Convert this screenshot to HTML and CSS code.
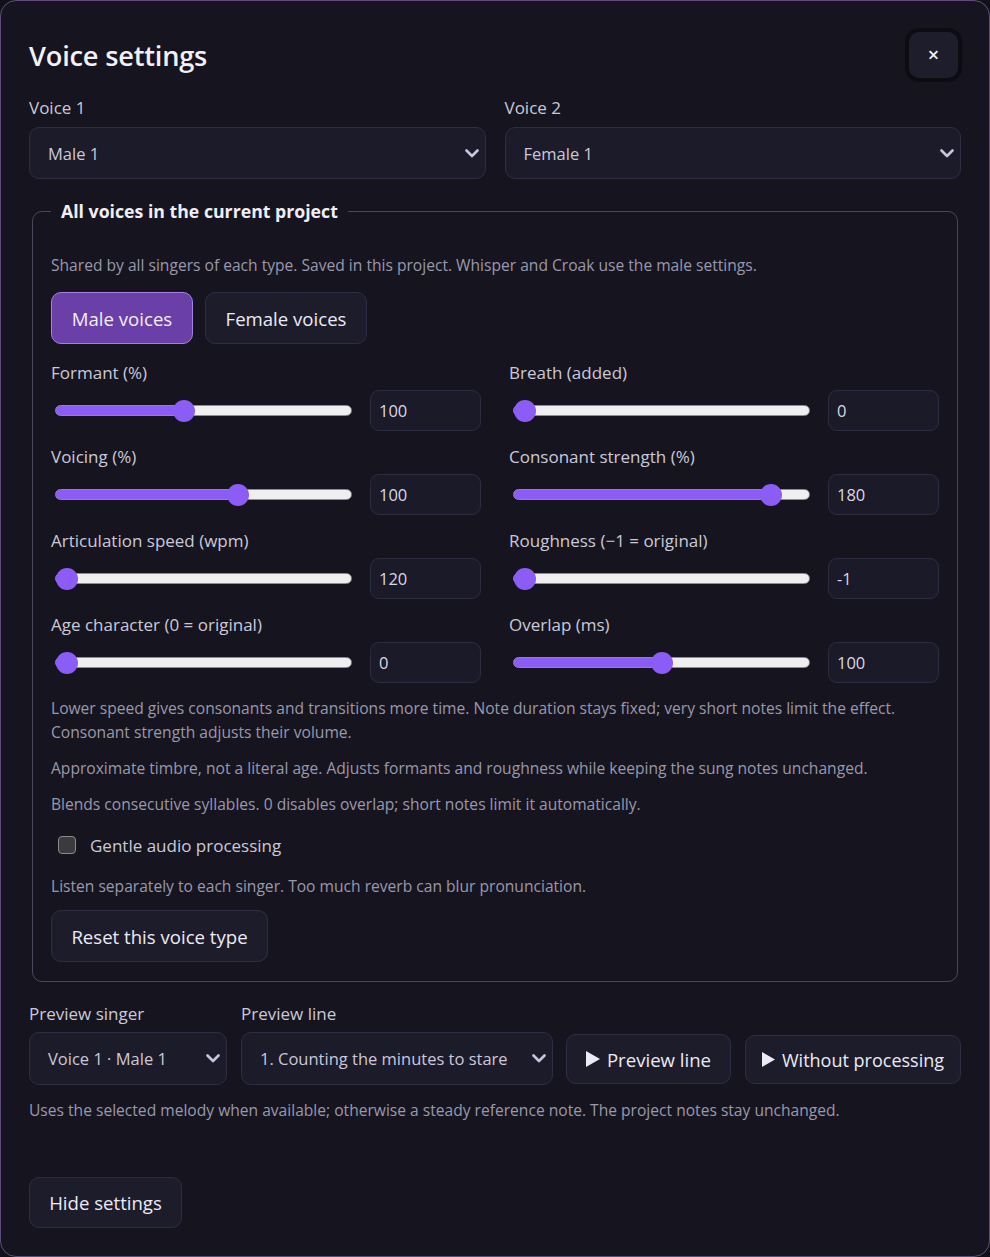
FILE: index.html
```html
<!DOCTYPE html>
<html lang="en">
<head>
<meta charset="utf-8">
<title>Voice settings</title>
<link rel="stylesheet" href="styles.css">
</head>
<body>
<div class="panel">
  <div class="header">
    <h1 class="title">Voice settings</h1>
    <button class="close-btn" aria-label="Close">×</button>
  </div>

  <div class="voice-row">
    <div class="field">
      <div class="label">Voice 1</div>
      <div class="select"><span>Male 1</span><svg class="chev" viewBox="0 0 14 9" width="14" height="9"><path d="M1.5 1.5 L7 7 L12.5 1.5" fill="none" stroke="currentColor" stroke-width="2.6" stroke-linecap="round" stroke-linejoin="round"/></svg></div>
    </div>
    <div class="field">
      <div class="label">Voice 2</div>
      <div class="select"><span>Female 1</span><svg class="chev" viewBox="0 0 14 9" width="14" height="9"><path d="M1.5 1.5 L7 7 L12.5 1.5" fill="none" stroke="currentColor" stroke-width="2.6" stroke-linecap="round" stroke-linejoin="round"/></svg></div>
    </div>
  </div>

  <fieldset class="group">
    <legend class="legend">All voices in the current project</legend>
    <p class="hint first">Shared by all singers of each type. Saved in this project. Whisper and Croak use the male settings.</p>
    <div class="tabs">
      <button class="btn tab active">Male voices</button>
      <button class="btn tab">Female voices</button>
    </div>

    <div class="sliders">
      <div class="slider-field">
        <div class="label">Formant (%)</div>
        <div class="slider-row">
          <input class="range" type="range" min="70" max="140" value="100" style="--p:43%">
          <div class="num">100</div>
        </div>
      </div>
      <div class="slider-field">
        <div class="label">Breath (added)</div>
        <div class="slider-row">
          <input class="range" type="range" min="0" max="100" value="0" style="--p:0%">
          <div class="num">0</div>
        </div>
      </div>
      <div class="slider-field">
        <div class="label">Voicing (%)</div>
        <div class="slider-row">
          <input class="range" type="range" min="0" max="160" value="100" style="--p:62.5%">
          <div class="num">100</div>
        </div>
      </div>
      <div class="slider-field">
        <div class="label">Consonant strength (%)</div>
        <div class="slider-row">
          <input class="range" type="range" min="0" max="200" value="180" style="--p:90%">
          <div class="num">180</div>
        </div>
      </div>
      <div class="slider-field">
        <div class="label">Articulation speed (wpm)</div>
        <div class="slider-row">
          <input class="range" type="range" min="120" max="300" value="120" style="--p:0%">
          <div class="num">120</div>
        </div>
      </div>
      <div class="slider-field">
        <div class="label">Roughness (−1 = original)</div>
        <div class="slider-row">
          <input class="range" type="range" min="-1" max="100" value="-1" style="--p:0%">
          <div class="num">-1</div>
        </div>
      </div>
      <div class="slider-field">
        <div class="label">Age character (0 = original)</div>
        <div class="slider-row">
          <input class="range" type="range" min="0" max="100" value="0" style="--p:0%">
          <div class="num">0</div>
        </div>
      </div>
      <div class="slider-field">
        <div class="label">Overlap (ms)</div>
        <div class="slider-row">
          <input class="range" type="range" min="0" max="200" value="100" style="--p:50%">
          <div class="num">100</div>
        </div>
      </div>
    </div>

    <p class="hint para">Lower speed gives consonants and transitions more time. Note duration stays fixed; very short notes limit the effect. Consonant strength adjusts their volume.</p>
    <p class="hint para">Approximate timbre, not a literal age. Adjusts formants and roughness while keeping the sung notes unchanged.</p>
    <p class="hint para">Blends consecutive syllables. 0 disables overlap; short notes limit it automatically.</p>

    <label class="check-row"><span class="checkbox"></span><span class="check-label">Gentle audio processing</span></label>
    <p class="hint para listen">Listen separately to each singer. Too much reverb can blur pronunciation.</p>
    <button class="btn reset">Reset this voice type</button>
  </fieldset>

  <div class="preview-row">
    <div class="field singer">
      <div class="label">Preview singer</div>
      <div class="select tall"><span>Voice 1 · Male 1</span><svg class="chev" viewBox="0 0 14 9" width="14" height="9"><path d="M1.5 1.5 L7 7 L12.5 1.5" fill="none" stroke="currentColor" stroke-width="2.6" stroke-linecap="round" stroke-linejoin="round"/></svg></div>
    </div>
    <div class="field line">
      <div class="label">Preview line</div>
      <div class="select tall"><span>1. Counting the minutes to stare</span><svg class="chev" viewBox="0 0 14 9" width="14" height="9"><path d="M1.5 1.5 L7 7 L12.5 1.5" fill="none" stroke="currentColor" stroke-width="2.6" stroke-linecap="round" stroke-linejoin="round"/></svg></div>
    </div>
    <button class="btn play"><svg class="tri" viewBox="0 0 14 16" width="14" height="16"><path d="M0 0 L14 8 L0 16 Z" fill="currentColor"/></svg>Preview line</button>
    <button class="btn play alt"><svg class="tri small" viewBox="0 0 14 16" width="13" height="15"><path d="M0 0 L14 8 L0 16 Z" fill="currentColor"/></svg>Without processing</button>
  </div>
  <p class="hint uses">Uses the selected melody when available; otherwise a steady reference note. The project notes stay unchanged.</p>

  <div class="footer">
    <button class="btn hide">Hide settings</button>
  </div>
</div>
</body>
</html>
```

FILE: styles.css
```css
* { box-sizing: border-box; }
html, body { margin: 0; padding: 0; background: #121119; }
body {
  font-family: "Open Sans", "Noto Sans", "DejaVu Sans", sans-serif;
  color: #cbc9d9;
  width: 990px;
  height: 1257px;
}
.panel {
  width: 990px;
  height: 1257px;
  background: #16151f;
  border: 1px solid #5d4d7f;
  border-radius: 16px;
  padding: 28px;
  display: flex;
  flex-direction: column;
}
.header {
  display: flex;
  justify-content: space-between;
  align-items: center;
  height: 52px;
}
.title {
  margin: 0;
  font-size: 27.2px;
  font-weight: 600;
  color: #f2f0fa;
  letter-spacing: -0.2px;
}
.close-btn {
  width: 49px;
  height: 46px;
  margin-right: 3px;
  border: none;
  border-radius: 10px;
  background: #1e1d2c;
  color: #f0eef8;
  font-family: inherit;
  font-size: 20px;
  font-weight: 600;
  box-shadow: 0 0 0 4px #0d0c13;
  padding: 0;
  line-height: 46px;
}
.voice-row {
  display: flex;
  gap: 19px;
  margin-top: 16px;
}
.field { display: flex; flex-direction: column; }
.voice-row .field { flex: 1; }
.label {
  font-size: 17px;
  line-height: 22px;
  color: #cbc9d9;
  white-space: nowrap;
}
.select {
  margin-top: 8px;
  height: 52px;
  background: #1c1b29;
  border: 1px solid #2f2d44;
  border-radius: 10px;
  display: flex;
  align-items: center;
  justify-content: space-between;
  padding: 0 6px 0 18px;
  font-size: 16.5px;
  color: #cbc8db;
  white-space: nowrap;
}
.chev { color: #c8c4dc; flex: none; }

.group {
  margin: 19px 3px 0;
  border: 1px solid #4a465f;
  border-radius: 10px;
  padding: 0 18px 19px;
  display: flex;
  flex-direction: column;
}
.legend {
  padding: 0 10px;
  margin-left: 0;
  font-size: 17.7px;
  line-height: 26px;
  font-weight: 700;
  color: #f0eef8;
}
.hint {
  margin: 0;
  font-size: 15.6px;
  line-height: 22px;
  color: #9a98ad;
}
.hint.first { margin-top: 30px; }
.tabs {
  display: flex;
  gap: 12px;
  margin-top: 16px;
}
.btn {
  font-family: inherit;
  font-size: 18.6px;
  color: #eceaf5;
  background: #1d1c2b;
  border: 1px solid #2f2d44;
  border-radius: 10px;
  padding: 0 20px;
  height: 52px;
  cursor: pointer;
  white-space: nowrap;
}
.tab { width: 142px; padding: 0; }
.tab + .tab { width: 162px; }
.tab.active {
  background: #6a40a8;
  border-color: #a47fe4;
  color: #f3eefc;
}
.sliders {
  display: grid;
  grid-template-columns: 1fr 1fr;
  column-gap: 28px;
  margin-top: 18px;
}
.slider-field { margin-bottom: 15px; }
.slider-row {
  display: flex;
  align-items: center;
  margin-top: 6px;
  height: 41px;
}
.range {
  -webkit-appearance: none;
  appearance: none;
  flex: 1;
  min-width: 0;
  margin: 0 18px 0 4px;
  height: 22px;
  background: transparent;
}
.range::-webkit-slider-runnable-track {
  height: 11px;
  border-radius: 6px;
  border: 1px solid #8f8a9a;
  background: linear-gradient(to right, #8b5cf6 0, #8b5cf6 calc(11px + (100% - 22px) * var(--p) / 100%), #efefef calc(11px + (100% - 22px) * var(--p) / 100%), #efefef 100%);
}
.range::-webkit-slider-thumb {
  -webkit-appearance: none;
  appearance: none;
  width: 22px;
  height: 22px;
  border-radius: 50%;
  background: #8b5cf6;
  border: none;
  margin-top: -6.5px;
}
.num {
  width: 111px;
  height: 41px;
  flex: none;
  background: #1b1a28;
  border: 1px solid #2d2b40;
  border-radius: 9px;
  padding: 0 8px;
  display: flex;
  align-items: center;
  font-size: 16.5px;
  color: #d9d7e5;
}
.hint.para {
  line-height: 24px;
}
.sliders + .hint.para { margin-top: -2px; }
.hint.para + .hint.para { margin-top: 12px; }
.check-row {
  display: flex;
  align-items: center;
  margin-top: 18px;
  height: 22px;
}
.checkbox {
  width: 18px;
  height: 18px;
  margin-left: 7px;
  border: 1px solid #8a8a8f;
  background: #3b3b3d;
  border-radius: 4px;
}
.check-label {
  margin-left: 14px;
  font-size: 17px;
  color: #cbc9d9;
}
.hint.listen { margin-top: 18px; }
.reset {
  margin-top: 12px;
  align-self: flex-start;
  height: 52px;
  width: 217px;
  padding: 0;
}
.preview-row {
  display: flex;
  align-items: flex-end;
  margin-top: 21px;
}
.preview-row .select.tall {
  height: 53px;
  margin-top: 7px;
}
.singer { width: 198px; }
.line { width: 312px; margin-left: 14px; }
.play {
  height: 50px;
  width: 165px;
  margin-left: 13px;
  margin-bottom: 1px;
  padding: 0;
  display: flex;
  align-items: center;
  justify-content: center;
}
.play.alt { height: 49px; width: 216px; margin-left: 14px; font-size: 18px; }
.tri { margin-right: 7px; flex: none; }
.uses { margin-top: 14px; }
.footer { margin-top: auto; }
.hide { height: 51px; width: 153px; padding: 0; }
```
